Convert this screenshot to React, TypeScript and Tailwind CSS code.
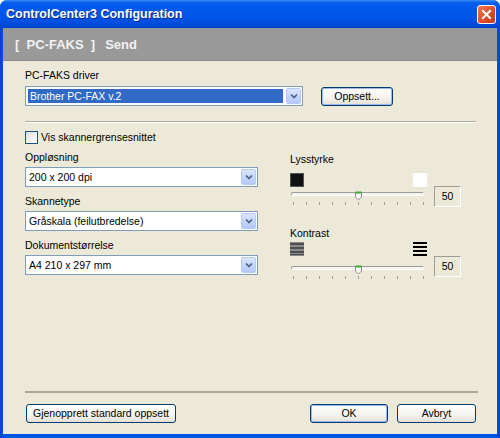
import type { ReactNode } from "react";

function Chevron() {
  return (
    <svg width="8" height="6" viewBox="0 0 8 6">
      <path d="M1 1.5l3 3 3-3" fill="none" stroke="#4d6185" strokeWidth="1.7" />
    </svg>
  );
}

function Dropdown({ value, selected = false, className = "" }: { value: string; selected?: boolean; className?: string }) {
  return (
    <div className={`flex border border-[#7f9db9] bg-white p-px ${className}`}>
      <div
        className={`flex flex-1 items-center pl-[2px] ${
          selected ? "m-px mr-[3px] bg-[#316ac5] text-white" : "text-black"
        }`}
      >
        {value}
      </div>
      <div className="flex w-[15px] items-center justify-center rounded-[2px] border border-[#b4c9f5] bg-[linear-gradient(to_bottom,#dbe5fc,#c3d4fa_60%,#b5c9f7)]">
        <Chevron />
      </div>
    </div>
  );
}

function XpButton({ children, className = "", focus = false }: { children: ReactNode; className?: string; focus?: boolean }) {
  return (
    <div
      className={`flex h-[19px] items-center justify-center rounded-[3px] border border-[#003c74] bg-[linear-gradient(to_bottom,#ffffff,#f4f3ee_60%,#e3e0d6)] text-black ${
        focus ? "shadow-[inset_0_0_0_1px_#9cb8ec]" : ""
      } ${className}`}
    >
      {children}
    </div>
  );
}

function Slider() {
  return (
    <div className="relative">
      <div className="ml-px h-[4px] w-[133px] rounded-[2px] border border-[#9d9c99] border-b-white border-r-white bg-[#f4f3ee]" />
      <svg className="absolute left-[65px] top-[-1px]" width="7" height="10" viewBox="0 0 7 10">
        <path d="M0.5 1.5h6v4.5l-3 3-3-3z" fill="#fcfcfb" stroke="#8c8b86" />
        <rect x="0.5" y="0.5" width="6" height="2" fill="#2fae2f" />
      </svg>
      <div className="ml-[3px] mt-[6px] flex w-[131px] justify-between">
        {Array.from({ length: 11 }).map((_, i) => (
          <div key={i} className="h-[3px] w-px bg-[#a19f98]" />
        ))}
      </div>
    </div>
  );
}

function ValueBox({ className = "" }: { className?: string }) {
  return (
    <div
      className={`ml-[7px] flex h-[21px] w-[27px] items-center justify-center border border-b-white border-l-[#a09d94] border-r-white border-t-[#a09d94] text-black ${className}`}
    >
      50
    </div>
  );
}

function LinesIcon({ color }: { color: "gray" | "black" }) {
  if (color === "gray")
    return (
      <svg width="14" height="14" viewBox="0 0 14 14">
        <rect width="14" height="14" fill="#8a8a8a" />
        <rect y="1" width="14" height="2" fill="#4e4e4e" />
        <rect y="5" width="14" height="2" fill="#4e4e4e" />
        <rect y="9" width="14" height="2" fill="#4e4e4e" />
        <rect y="12" width="14" height="1" fill="#4e4e4e" />
      </svg>
    );
  return (
    <svg width="14" height="14" viewBox="0 0 14 14">
      <rect y="0" width="14" height="2" fill="#000" />
      <rect y="4" width="14" height="2" fill="#000" />
      <rect y="8" width="14" height="2" fill="#000" />
      <rect y="12" width="14" height="2" fill="#000" />
    </svg>
  );
}

export default function App() {
  return (
    <div className="flex h-[438px] w-[500px] flex-col overflow-hidden rounded-t-[7px] bg-[linear-gradient(to_right,#0842c4,#0058e8_1%,#0058e8_99%,#0842c4)] font-['Liberation_Sans',Arial,sans-serif] text-[10.5px] leading-[13px]">
      {/* title bar */}
      <div className="flex h-[28px] shrink-0 items-center bg-[linear-gradient(to_bottom,#3d8ef5_0%,#0a62ea_8%,#0058ee_20%,#0055e8_60%,#004bdb_88%,#0042c9_100%)] pl-[6px] pr-[4px]">
        <span className="flex-1 text-[12.5px] font-bold text-white [text-shadow:1px_1px_0_#0a2a8a]">
          ControlCenter3 Configuration
        </span>
        <div className="flex h-[19px] w-[19px] items-center justify-center rounded-[3px] border border-white bg-[linear-gradient(135deg,#ec7a58,#dc4a24_60%,#c63c1c)]">
          <svg width="11" height="11" viewBox="0 0 11 11">
            <path d="M2 2l7 7M9 2l-7 7" stroke="#fff" strokeWidth="2" strokeLinecap="square" />
          </svg>
        </div>
      </div>

      <div className="flex flex-1 flex-col px-[3px] pb-[4px]">
        {/* gray header */}
        <div className="flex h-[33px] shrink-0 items-center border-b border-[#8a8a8a] bg-[#999999] pl-[12px] text-[13px] font-bold text-[#f2f2f2]">
          <span>[&nbsp;&nbsp;PC-FAKS&nbsp;&nbsp;]</span>
          <span className="ml-[10px]">Send</span>
        </div>

        {/* body */}
        <div className="flex flex-1 flex-col bg-[#ece9d8] pl-[22px] pr-[19px] pt-[8px] text-black">
          <div>PC-FAKS driver</div>
          <div className="mt-[4px] flex items-center">
            <Dropdown value="Brother PC-FAX v.2" selected className="h-[20px] w-[278px]" />
            <XpButton focus className="ml-[18px] h-[18px] w-[72px]">
              Oppsett...
            </XpButton>
          </div>

          <div className="mt-[15px] w-[451px] border-b border-t border-b-white border-t-[#aca899]" />

          <div className="mt-[8px] flex items-center">
            <div className="h-[13px] w-[13px] border border-[#1c5180] bg-[linear-gradient(135deg,#dcdcd7,#f4f4f1_60%,#ffffff)]" />
            <span className="ml-[3px]">Vis skannergrensesnittet</span>
          </div>

          <div className="mt-[7px] flex items-start">
            {/* left column */}
            <div className="flex w-[233px] flex-col">
              <div>Oppløsning</div>
              <Dropdown value="200 x 200 dpi" className="mt-[3px] h-[20px]" />
              <div className="mt-[8px]">Skannetype</div>
              <Dropdown value="Gråskala (feilutbredelse)" className="mt-[3px] h-[20px]" />
              <div className="mt-[8px]">Dokumentstørrelse</div>
              <Dropdown value="A4 210 x 297 mm" className="mt-[3px] h-[20px]" />
            </div>

            {/* right column */}
            <div className="ml-[32px] flex flex-col pt-[2px]">
              <div>Lysstyrke</div>
              <div className="mt-[7px] flex items-start">
                <div className="flex w-[137px] flex-col">
                  <div className="flex justify-between">
                    <div className="h-[14px] w-[14px] border border-[#555] bg-[#111]" />
                    <div className="h-[14px] w-[14px] bg-white" />
                  </div>
                  <div className="mt-[5px]">
                    <Slider />
                  </div>
                </div>
                <ValueBox className="mt-[13px]" />
              </div>

              <div className="mt-[20px]">Kontrast</div>
              <div className="mt-[2px] flex items-start">
                <div className="flex w-[137px] flex-col">
                  <div className="flex justify-between">
                    <LinesIcon color="gray" />
                    <LinesIcon color="black" />
                  </div>
                  <div className="mt-[10px]">
                    <Slider />
                  </div>
                </div>
                <ValueBox className="mt-[14px]" />
              </div>
            </div>
          </div>

          <div className="flex-1" />

          <div className="h-[2px] w-[453px] bg-[#aca899]" />
          <div className="mb-[11px] mt-[11px] flex items-center pr-[2px]">
            <XpButton className="ml-px w-[150px]">Gjenopprett standard oppsett</XpButton>
            <div className="flex-1" />
            <XpButton focus className="w-[78px]">
              OK
            </XpButton>
            <XpButton className="ml-[9px] w-[79px]">Avbryt</XpButton>
          </div>
        </div>
      </div>
    </div>
  );
}
